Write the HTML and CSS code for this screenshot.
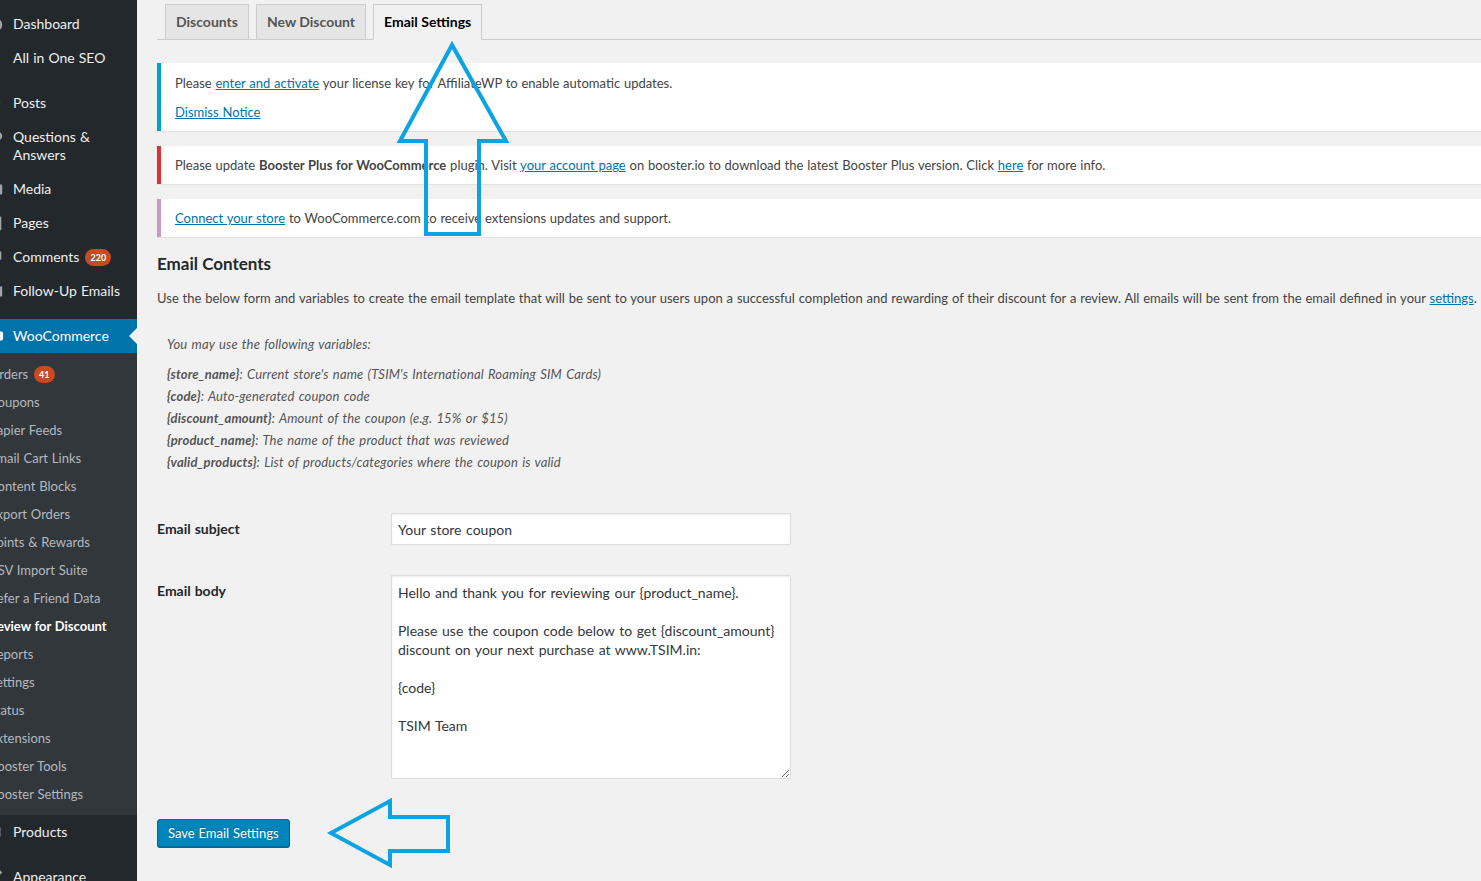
FILE: index.html
```html
<!DOCTYPE html>
<html lang="en">
  <head>
    <meta charset="UTF-8" />
    <meta name="viewport" content="width=device-width, initial-scale=1.0" />
    <title>Review for Discount - Email Settings</title>

    <link rel="stylesheet" href="styles.css">
  </head>
  <body>
    <div class="admin">
      <!-- sidebar, scrolled a little to the left like in the screenshot -->
      <div class="admin-menu">
        <ul class="menu">
          <li class="menu-top">
            <a href="#">
              <span class="menu-icon"><svg viewBox="0 0 20 20"><path d="M10 3a8 8 0 0 0-8 8c0 2 .7 3.7 2 5h12a8 8 0 0 0 2-5 8 8 0 0 0-8-8z"/></svg></span>
              <span class="menu-name">Dashboard</span>
            </a>
          </li>
          <li class="menu-top">
            <a href="#">
              <span class="menu-icon"></span>
              <span class="menu-name">All in One SEO</span>
            </a>
          </li>
          <li class="menu-sep"></li>
          <li class="menu-top">
            <a href="#">
              <span class="menu-icon"><svg viewBox="0 0 20 20"><path d="M10 4l6 6-2 1-4-4-1 1 3 3-1 2-6-6z"/></svg></span>
              <span class="menu-name">Posts</span>
            </a>
          </li>
          <li class="menu-top">
            <a href="#">
              <span class="menu-icon"><svg viewBox="0 0 20 20"><path d="M10 3c4.4 0 8 2.7 8 6s-3.6 6-8 6l-4 3v-4c-2.4-1-4-3-4-5 0-3.3 3.6-6 8-6z"/></svg></span>
              <span class="menu-name">Questions &amp; Answers</span>
            </a>
          </li>
          <li class="menu-top">
            <a href="#">
              <span class="menu-icon"><svg viewBox="0 0 20 20"><rect x="3" y="5" width="15" height="11" rx="1"/></svg></span>
              <span class="menu-name">Media</span>
            </a>
          </li>
          <li class="menu-top">
            <a href="#">
              <span class="menu-icon"><svg viewBox="0 0 20 20"><rect x="5" y="3" width="12" height="15"/></svg></span>
              <span class="menu-name">Pages</span>
            </a>
          </li>
          <li class="menu-top">
            <a href="#">
              <span class="menu-icon"><svg viewBox="0 0 20 20"><path d="M3 4h14v9h-6l-4 3v-3H3z"/></svg></span>
              <span class="menu-name">Comments <span class="count">220</span></span>
            </a>
          </li>
          <li class="menu-top">
            <a href="#">
              <span class="menu-icon"><svg viewBox="0 0 20 20"><path d="M2 5h16v11H2zm2 2l6 5 6-5z"/></svg></span>
              <span class="menu-name">Follow-Up Emails</span>
            </a>
          </li>
          <li class="menu-sep"></li>
          <li class="menu-top menu-open">
            <a href="#" class="menu-current">
              <span class="menu-icon"><svg viewBox="0 0 20 20"><rect x="2" y="5" width="17" height="10" rx="2"/></svg></span>
              <span class="menu-name">WooCommerce</span>
            </a>
            <ul class="submenu">
              <li><a href="#">Orders <span class="count">41</span></a></li>
              <li><a href="#">Coupons</a></li>
              <li><a href="#">Zapier Feeds</a></li>
              <li><a href="#">Email Cart Links</a></li>
              <li><a href="#">Content Blocks</a></li>
              <li><a href="#">Export Orders</a></li>
              <li><a href="#">Points &amp; Rewards</a></li>
              <li><a href="#">CSV Import Suite</a></li>
              <li><a href="#">Refer a Friend Data</a></li>
              <li class="current"><a href="#">Review for Discount</a></li>
              <li><a href="#">Reports</a></li>
              <li><a href="#">Settings</a></li>
              <li><a href="#">Status</a></li>
              <li><a href="#">Extensions</a></li>
              <li><a href="#">Booster Tools</a></li>
              <li><a href="#">Booster Settings</a></li>
            </ul>
          </li>
          <li class="menu-top">
            <a href="#">
              <span class="menu-icon"><svg viewBox="0 0 20 20"><path d="M4 5l6-3 6 3v10l-6 3-6-3z"/></svg></span>
              <span class="menu-name">Products</span>
            </a>
          </li>
          <li class="menu-sep"></li>
          <li class="menu-top">
            <a href="#">
              <span class="menu-icon"><svg viewBox="0 0 20 20"><path d="M15 2l3 3-7 7-3-3zM7 10l3 3c-1 3-4 4-7 4 1-2 1-6 4-7z"/></svg></span>
              <span class="menu-name">Appearance</span>
            </a>
          </li>
        </ul>
      </div>

      <div class="content">
        <h2 class="nav-tabs">
          <a href="#" class="nav-tab">Discounts</a>
          <a href="#" class="nav-tab">New Discount</a>
          <a href="#" class="nav-tab nav-tab-active">Email Settings</a>
        </h2>

        <div class="notice notice-info">
          <p>Please <a href="#">enter and activate</a> your license key for AffiliateWP to enable automatic updates.</p>
          <p><a href="#">Dismiss Notice</a></p>
        </div>
        <div class="notice notice-error">
          <p>Please update <strong>Booster Plus for WooCommerce</strong> plugin. Visit <a href="#">your account page</a> on booster.io to download the latest Booster Plus version. Click <a href="#">here</a> for more info.</p>
        </div>
        <div class="notice notice-woo">
          <p><a href="#">Connect your store</a> to WooCommerce.com to receive extensions updates and support.</p>
        </div>

        <h2 class="section-title">Email Contents</h2>
        <p class="section-desc">Use the below form and variables to create the email template that will be sent to your users upon a successful completion and rewarding of their discount for a review. All emails will be sent from the email defined in your <a href="#">settings</a>.</p>

        <div class="vars">
          <p class="vars-intro">You may use the following variables:</p>
          <ul class="vars-list">
            <li><b>{store_name}</b>: Current store's name (TSIM's International Roaming SIM Cards)</li>
            <li><b>{code}</b>: Auto-generated coupon code</li>
            <li><b>{discount_amount}</b>: Amount of the coupon (e.g. 15% or $15)</li>
            <li><b>{product_name}</b>: The name of the product that was reviewed</li>
            <li><b>{valid_products}</b>: List of products/categories where the coupon is valid</li>
          </ul>
        </div>

        <div class="form-table">
          <label class="form-label" for="email-subject">Email subject</label>
          <div class="form-field">
            <input type="text" id="email-subject" class="text-input" value="Your store coupon" />
          </div>
          <label class="form-label" for="email-body">Email body</label>
          <div class="form-field">
            <textarea id="email-body" class="text-area">Hello and thank you for reviewing our {product_name}.

Please use the coupon code below to get {discount_amount} discount on your next purchase at www.TSIM.in:

{code}

TSIM Team</textarea>
          </div>
        </div>

        <p class="submit">
          <button type="button" class="button-primary">Save Email Settings</button>
        </p>
      </div>
    </div>

    <!-- the two blue arrows drawn over the screenshot -->
    <svg class="callouts" viewBox="0 0 1481 881">
      <polygon points="452,45 400,141 426,141 426,234 479,234 479,141 506,141" />
      <polygon points="331,833 390,801 390,817 448,817 448,851 390,851 390,865" />
    </svg>
  </body>
</html>
```

FILE: styles.css
```css
* {
  box-sizing: border-box;
}

html,
body {
  margin: 0;
  padding: 0;
  height: 100%;
}

body {
  background-color: #f1f1f1;
  color: #444;
  font-family: "Lato", "Noto Sans", sans-serif;
  font-size: 13px;
  line-height: 1.4;
  word-spacing: 0.5px;
  overflow: hidden;
  position: relative;
}

a {
  color: #0073aa;
}

.admin {
  display: flex;
  min-height: 100%;
}

/* ---------- sidebar ---------- */
.admin-menu {
  width: 137px;
  flex: none;
  background-color: #23282d;
  overflow: hidden;
}

.menu {
  list-style: none;
  margin: 0 0 0 -23px; /* ảnh bị cắt mất phần icon bên trái */
  padding: 7px 0 0;
  width: 160px;
}

.menu-top > a {
  display: flex;
  align-items: flex-start;
  padding: 8px 0;
  color: #eee;
  text-decoration: none;
  font-size: 14px;
  line-height: 18px;
  position: relative;
}

.menu-icon {
  width: 36px;
  flex: none;
  display: flex;
  justify-content: center;
}

.menu-icon svg {
  width: 20px;
  height: 18px;
  fill: #a0a5aa;
}

.menu-name {
  padding-right: 8px;
}

.menu-sep {
  height: 11px;
}

.menu-current {
  background-color: #0073aa;
}

.menu-top > a.menu-current {
  color: #fff;
}

.menu-current .menu-icon svg {
  fill: #fff;
}

/* mũi tên nhỏ ở cạnh phải của mục đang chọn */
.menu-current::after {
  content: "";
  position: absolute;
  right: 0;
  top: 50%;
  margin-top: -8px;
  border: 8px solid transparent;
  border-right-color: #f1f1f1;
}

.submenu {
  list-style: none;
  margin: 0;
  padding: 7px 0;
  background-color: #32373c;
}

.submenu a {
  display: block;
  padding: 5px 0 5px 12px;
  line-height: 18px;
  font-size: 13px;
  color: #b4b9be;
  text-decoration: none;
  white-space: nowrap;
}

.submenu .current a {
  color: #fff;
  font-weight: 700;
}

.count {
  display: inline-block;
  vertical-align: 1px;
  height: 17px;
  min-width: 17px;
  padding: 0 5px;
  margin-left: 2px;
  border-radius: 9px;
  background-color: #ca4a1f;
  color: #fff;
  font-size: 9px;
  font-weight: 700;
  line-height: 17px;
  text-align: center;
  word-spacing: 0;
}

/* ---------- content ---------- */
.content {
  flex: 1;
  min-width: 0;
  padding-left: 20px;
  overflow: hidden;
}

.nav-tabs {
  display: flex;
  margin: 0;
  padding: 4px 0 0;
  border-bottom: 1px solid #ccc;
  line-height: 24px;
}

.nav-tab {
  margin-left: 7px;
  margin-bottom: -1px;
  padding: 5px 10px;
  border: 1px solid #ccc;
  background-color: #e5e5e5;
  color: #555;
  font-size: 14px;
  font-weight: 700;
  text-decoration: none;
  word-spacing: 0;
}

.nav-tab:first-child {
  margin-left: 8px;
}

.nav-tab-active {
  background-color: #f1f1f1;
  border-bottom-color: #f1f1f1;
  color: #000;
}

.notice {
  background-color: #fff;
  border-left: 4px solid #fff;
  box-shadow: 0 1px 1px rgba(0, 0, 0, 0.06);
  padding: 1px 12px;
  margin-bottom: 15px;
}

.notice:first-of-type {
  margin-top: 23px;
}

.notice p {
  margin: 0.5em 0;
  padding: 3px 2px 1px;
  line-height: 19px;
  white-space: nowrap;
}

.notice-info {
  border-left-color: #00a0d2;
}

.notice-error {
  border-left-color: #dc3232;
}

.notice-woo {
  border-left-color: #cc99c2;
}

.section-title {
  margin: 14px 0 0;
  font-size: 17px;
  font-weight: 700;
  line-height: 23px;
  color: #23282d;
  word-spacing: 0;
}

.section-desc {
  margin: 14px 0 0;
  line-height: 1.5;
  white-space: nowrap;
}

.vars {
  padding: 13px 10px;
  margin-top: 12px;
  color: #555;
  font-style: italic;
  word-spacing: 1px;
  letter-spacing: 0.15px;
}

.vars-intro {
  margin: 0 0 8px;
  line-height: 22px;
}

.vars-list {
  list-style: none;
  margin: 0;
  padding: 0;
  line-height: 22px;
}

.vars-list b {
  font-weight: 700;
}

.form-table {
  display: grid;
  grid-template-columns: 234px 400px;
  margin-top: 12px;
}

.form-label {
  padding-top: 21px;
  line-height: 20px;
  font-size: 14px;
  font-weight: 700;
  color: #23282d;
}

.form-field {
  padding: 15px 0;
}

.text-input,
.text-area {
  display: block;
  width: 400px;
  border: 1px solid #ddd;
  box-shadow: inset 0 1px 2px rgba(0, 0, 0, 0.07);
  background-color: #fff;
  color: #32373c;
  font-family: inherit;
  font-size: 14px;
  word-spacing: 1px;
}

.text-input {
  height: 32px;
  padding: 0 6px;
}

.text-area {
  height: 204px;
  padding: 7px 6px;
  line-height: 19px;
}

.submit {
  margin: 0;
  padding-top: 25px;
}

.button-primary {
  height: 28px;
  padding: 0 10px;
  border: 1px solid #006799;
  border-radius: 3px;
  background-color: #0085ba;
  box-shadow: 0 1px 0 #006799;
  color: #fff;
  font-family: inherit;
  font-size: 13px;
  line-height: 26px;
  word-spacing: 0.5px;
  text-shadow: 0 -1px 1px #006799;
  cursor: pointer;
}

/* ---------- blue arrows ---------- */
.callouts {
  position: absolute;
  top: 0;
  left: 0;
  width: 1481px;
  height: 881px;
  pointer-events: none;
}

.callouts polygon {
  fill: none;
  stroke: #0ba3e2;
  stroke-width: 4;
  stroke-linejoin: miter;
}
```
